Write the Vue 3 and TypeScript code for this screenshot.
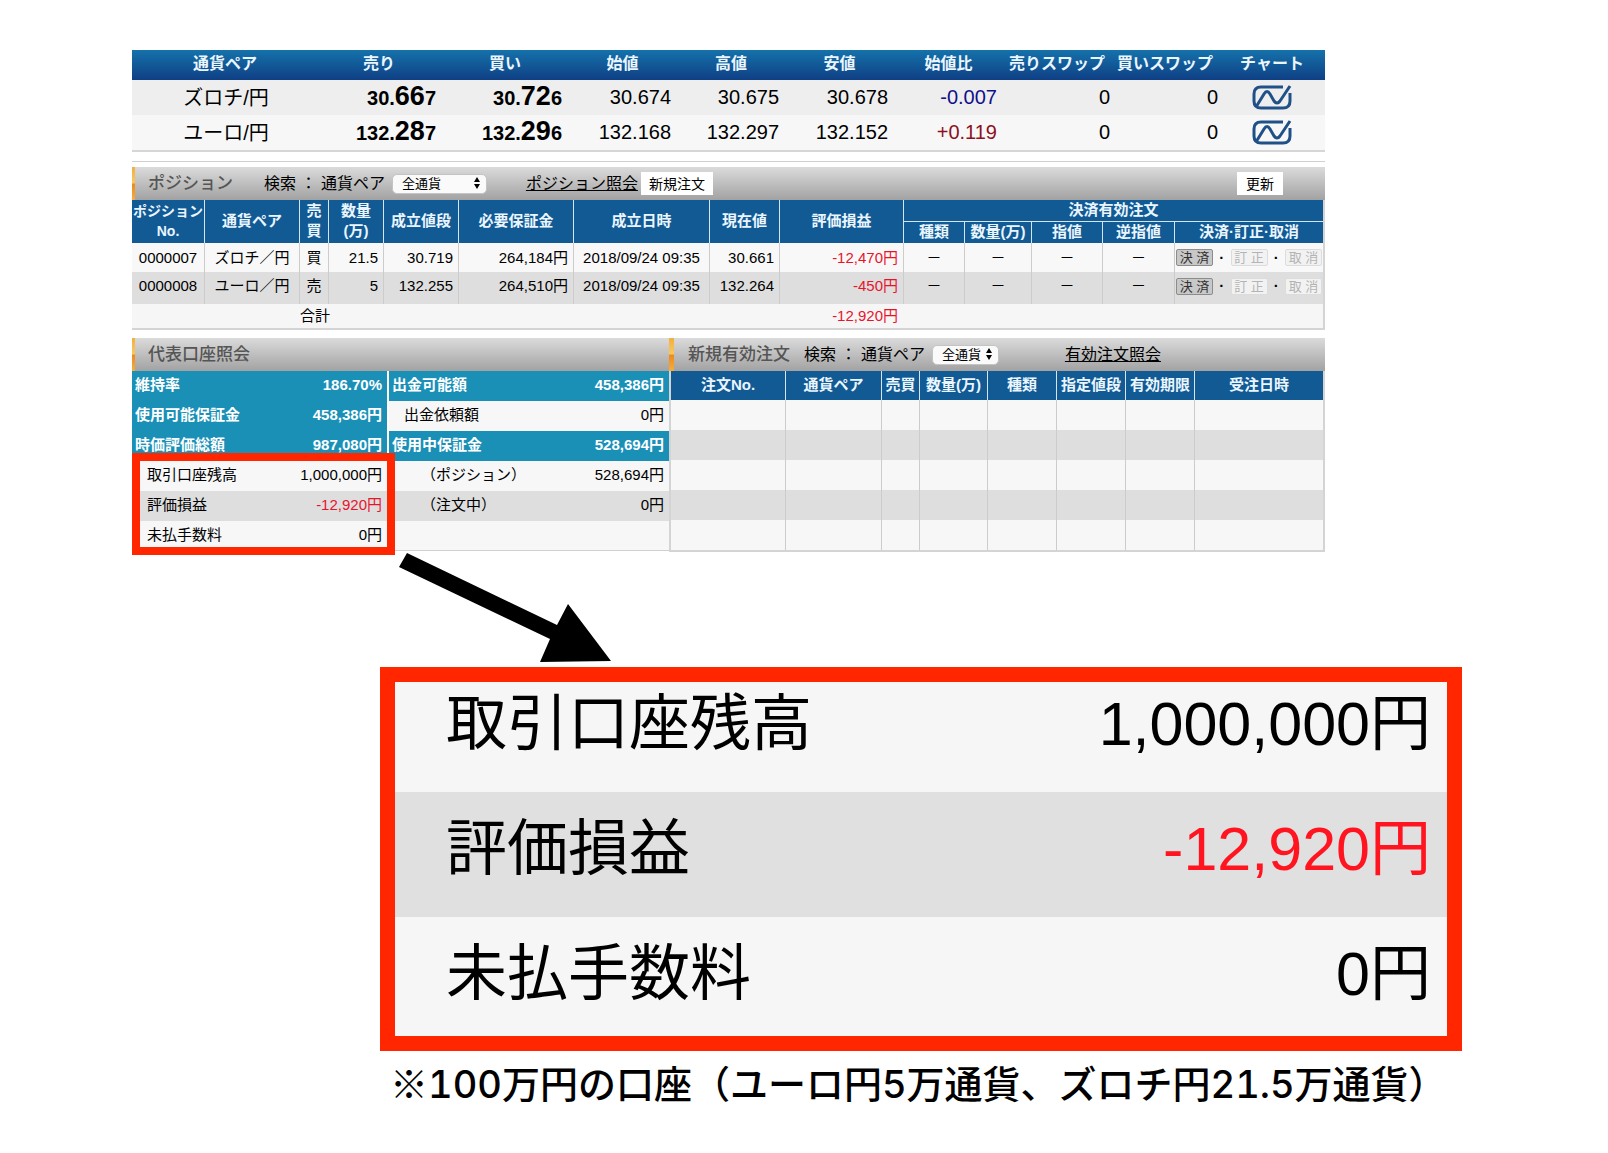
<script setup lang="ts">
interface Quote {
  pair: string
  bid: [string, string, string]
  ask: [string, string, string]
  open: string
  high: string
  low: string
  diff: string
}

interface Position {
  no: string
  pair: string
  side: string
  amount: string
  price: string
  margin: string
  time: string
  current: string
  profit: string
}

interface AccountCell {
  label: string
  value: string
  kind: string
}

const quoteHeads = ['通貨ペア', '売り', '買い', '始値', '高値', '安値', '始値比', '売りスワップ', '買いスワップ', 'チャート']
const quoteCols = [184, 126, 126, 109, 108, 109, 109, 108, 108, 106]
const quotes: Quote[] = [
  { pair: 'ズロチ/円', bid: ['30.', '66', '7'], ask: ['30.', '72', '6'], open: '30.674', high: '30.675', low: '30.678', diff: '-0.007' },
  { pair: 'ユーロ/円', bid: ['132.', '28', '7'], ask: ['132.', '29', '6'], open: '132.168', high: '132.297', low: '132.152', diff: '+0.119' },
]

const positionCols = [72, 95, 29, 55, 75, 115, 136, 70, 124, 61, 67, 71, 72, 149]
const positions: Position[] = [
  { no: '0000007', pair: 'ズロチ／円', side: '買', amount: '21.5', price: '30.719', margin: '264,184円', time: '2018/09/24 09:35', current: '30.661', profit: '-12,470円' },
  { no: '0000008', pair: 'ユーロ／円', side: '売', amount: '5', price: '132.255', margin: '264,510円', time: '2018/09/24 09:35', current: '132.264', profit: '-450円' },
]

const accountCols = [130, 125, 141, 141]
const account: [AccountCell, AccountCell][] = [
  [{ label: '維持率', value: '186.70%', kind: 'head' }, { label: '出金可能額', value: '458,386円', kind: 'head' }],
  [{ label: '使用可能保証金', value: '458,386円', kind: 'head' }, { label: '出金依頼額', value: '0円', kind: 'sub' }],
  [{ label: '時価評価総額', value: '987,080円', kind: 'head' }, { label: '使用中保証金', value: '528,694円', kind: 'head' }],
  [{ label: '取引口座残高', value: '1,000,000円', kind: 'sub' }, { label: '（ポジション）', value: '528,694円', kind: 'deep' }],
  [{ label: '評価損益', value: '-12,920円', kind: 'sub dark loss' }, { label: '（注文中）', value: '0円', kind: 'deep dark' }],
  [{ label: '未払手数料', value: '0円', kind: 'sub' }, { label: '', value: '', kind: 'sub' }],
]

const orderHeads = ['注文No.', '通貨ペア', '売買', '数量(万)', '種類', '指定値段', '有効期限', '受注日時']
const orderCols = [114, 96, 38, 68, 69, 69, 69, 129]

const zoomed = [
  { label: '取引口座残高', value: '1,000,000円', loss: false },
  { label: '評価損益', value: '-12,920円', loss: true },
  { label: '未払手数料', value: '0円', loss: false },
]
</script>

<template>
  <main class="page">
    <div class="desk">
      <table class="quotes">
        <colgroup><col v-for="(w, i) in quoteCols" :key="i" :style="{ width: w + 'px' }" /></colgroup>
        <thead>
          <tr><th v-for="h in quoteHeads" :key="h" scope="col">{{ h }}</th></tr>
        </thead>
        <tbody>
          <tr v-for="q in quotes" :key="q.pair">
            <td class="center pair">{{ q.pair }}</td>
            <td class="price">{{ q.bid[0] }}<b>{{ q.bid[1] }}</b>{{ q.bid[2] }}</td>
            <td class="price">{{ q.ask[0] }}<b>{{ q.ask[1] }}</b>{{ q.ask[2] }}</td>
            <td>{{ q.open }}</td>
            <td>{{ q.high }}</td>
            <td>{{ q.low }}</td>
            <td :class="q.diff.startsWith('-') ? 'down' : 'up'">{{ q.diff }}</td>
            <td class="swap">0</td>
            <td class="swap">0</td>
            <td class="center">
              <a href="#" class="chart" aria-label="チャート">
                <svg viewBox="0 0 40 25" width="40" height="25" fill="none" stroke="#1f5088" stroke-width="3">
                  <path d="M31 2H9Q2 2 2 9v7q0 7 7 7h22q7 0 7-7V8" />
                  <path d="M4 22L12 9q3-5 6 0l4 7q3 4 6 0L38 1" />
                </svg>
              </a>
            </td>
          </tr>
        </tbody>
      </table>
      <hr class="rule" />

      <section class="panel">
        <div class="bar">
          <h2 class="title">ポジション</h2>
          <label class="search" for="pos-pair">検索 ： 通貨ペア</label>
          <span class="pick wide">
            <select id="pos-pair"><option>全通貨</option></select>
            <svg viewBox="0 0 8 12" width="8" height="12"><path d="M4 0l3 5H1zM4 12l3-5H1z" /></svg>
          </span>
          <a href="#" class="link">ポジション照会</a>
          <button type="button" class="flat">新規注文</button>
          <button type="button" class="flat refresh">更新</button>
        </div>
        <table class="grid positions">
          <colgroup><col v-for="(w, i) in positionCols" :key="i" :style="{ width: w + 'px' }" /></colgroup>
          <thead>
            <tr>
              <th rowspan="2" scope="col" class="tight">ポジション<br />No.</th>
              <th rowspan="2" scope="col">通貨ペア</th>
              <th rowspan="2" scope="col">売<br />買</th>
              <th rowspan="2" scope="col">数量<br />(万)</th>
              <th rowspan="2" scope="col">成立値段</th>
              <th rowspan="2" scope="col">必要保証金</th>
              <th rowspan="2" scope="col">成立日時</th>
              <th rowspan="2" scope="col">現在値</th>
              <th rowspan="2" scope="col">評価損益</th>
              <th colspan="5" scope="colgroup" class="group">決済有効注文</th>
            </tr>
            <tr>
              <th scope="col">種類</th>
              <th scope="col">数量(万)</th>
              <th scope="col">指値</th>
              <th scope="col">逆指値</th>
              <th scope="col">決済·訂正·取消</th>
            </tr>
          </thead>
          <tbody>
            <tr v-for="p in positions" :key="p.no">
              <td>{{ p.no }}</td>
              <td>{{ p.pair }}</td>
              <td>{{ p.side }}</td>
              <td class="num">{{ p.amount }}</td>
              <td class="num">{{ p.price }}</td>
              <td class="num">{{ p.margin }}</td>
              <td>{{ p.time }}</td>
              <td class="num">{{ p.current }}</td>
              <td class="num loss">{{ p.profit }}</td>
              <td>－</td>
              <td>－</td>
              <td>－</td>
              <td>－</td>
              <td>
                <div class="acts">
                  <button type="button" class="act">決 済</button><b>·</b>
                  <button type="button" class="act" disabled>訂 正</button><b>·</b>
                  <button type="button" class="act" disabled>取 消</button>
                </div>
              </td>
            </tr>
          </tbody>
          <tfoot>
            <tr>
              <td colspan="2"></td>
              <td>合計</td>
              <td colspan="5"></td>
              <td class="num loss">-12,920円</td>
              <td colspan="5"></td>
            </tr>
          </tfoot>
        </table>
      </section>

      <div class="lower">
        <section class="account">
          <div class="bar"><h2 class="title">代表口座照会</h2></div>
          <div class="holder">
            <table class="balance">
              <colgroup><col v-for="(w, i) in accountCols" :key="i" :style="{ width: w + 'px' }" /></colgroup>
              <tbody>
                <tr v-for="(row, i) in account" :key="i">
                  <template v-for="(c, j) in row" :key="j">
                    <td :class="[c.kind, 'label']">{{ c.label }}</td>
                    <td :class="[c.kind, 'value']">{{ c.value }}</td>
                  </template>
                </tr>
              </tbody>
            </table>
            <div class="highlight"></div>
          </div>
        </section>

        <section class="orders">
          <div class="bar">
            <h2 class="title">新規有効注文</h2>
            <label class="search" for="ord-pair">検索 ： 通貨ペア</label>
            <span class="pick">
              <select id="ord-pair"><option>全通貨</option></select>
              <svg viewBox="0 0 8 12" width="8" height="12"><path d="M4 0l3 5H1zM4 12l3-5H1z" /></svg>
            </span>
            <a href="#" class="link">有効注文照会</a>
          </div>
          <table class="grid list">
            <colgroup><col v-for="(w, i) in orderCols" :key="i" :style="{ width: w + 'px' }" /></colgroup>
            <thead>
              <tr><th v-for="h in orderHeads" :key="h" scope="col">{{ h }}</th></tr>
            </thead>
            <tbody>
              <tr v-for="r in 5" :key="r"><td v-for="h in orderHeads" :key="h"></td></tr>
            </tbody>
          </table>
        </section>
      </div>
    </div>

    <svg class="arrow" viewBox="0 0 214 115" width="214" height="115" aria-hidden="true">
      <path d="M8 1L158 73L169 52L212 109L141 110L151 87L0 15Z" />
    </svg>

    <section class="closeup">
      <dl>
        <div v-for="z in zoomed" :key="z.label" class="line">
          <dt>{{ z.label }}</dt>
          <dd :class="{ loss: z.loss }">{{ z.value }}</dd>
        </div>
      </dl>
    </section>
    <p class="note"><span class="mark">※</span>100万円の口座（ユーロ円5万通貨、ズロチ円21.5万通貨）</p>
  </main>
</template>

<style>
body {
  background: #fff;
}
</style>

<style scoped>
.page {
  box-sizing: border-box;
  padding: 50px 0 40px;
  font-family: "Liberation Sans", "Noto Sans CJK JP", sans-serif;
  font-size: 15px;
  line-height: 20px;
  color: #000;
}
.desk {
  margin: 0 283px 0 132px;
}
table {
  width: 100%;
  table-layout: fixed;
  border-collapse: separate;
  border-spacing: 0;
}
th,
td {
  box-sizing: border-box;
  padding: 0;
  white-space: nowrap;
}
a {
  color: inherit;
}
.loss {
  color: #e8142c;
}

.quotes {
  border-bottom: 2px solid #d6d6d6;
  font-size: 20px;
}
.quotes th {
  height: 30px;
  padding-bottom: 2px;
  font-size: 16px;
  color: #eaf6ff;
}
.quotes thead {
  background: linear-gradient(#1572ab, #0f3f84);
}
.quotes td {
  height: 35px;
  padding: 0 6px 1px 0;
  text-align: right;
  line-height: 30px;
}
.quotes tbody tr {
  background: #f7f7f7;
}
.quotes tbody tr:first-child {
  background: #eee;
}
.quotes td.center {
  padding: 0;
  text-align: center;
}
.quotes td.pair {
  padding-left: 4px;
}
.quotes th:first-child {
  padding-left: 2px;
}
.quotes td.swap {
  padding-right: 1px;
}
.price {
  font-weight: bold;
}
.price b {
  font-size: 27px;
}
.down {
  color: #10108c;
}
.up {
  color: #8c1020;
}
.chart,
.chart svg {
  display: block;
}
.chart svg {
  margin: 0 auto;
}
.rule {
  margin: 9px 0 5px;
  border: 0;
  border-top: 1px solid #d0d0d0;
}

.bar {
  display: flex;
  align-items: center;
  height: 33px;
  box-sizing: border-box;
  border-left: 3px solid;
  border-image: linear-gradient(#f3ad3c, #f8c860 48%, #ef8a1c 52%, #f5b040) 1;
  background: linear-gradient(#dadbda, #a2a2a2);
  font-size: 16px;
}
.title {
  margin: 0 0 0 13px;
  font-size: 17px;
  font-weight: 500;
  color: #555;
}
.search {
  margin-left: 31px;
  white-space: pre;
}
.pick {
  position: relative;
  width: 67px;
  height: 20px;
  margin-left: 7px;
}
.pick.wide {
  width: 95px;
}
.pick select {
  appearance: none;
  display: block;
  width: 100%;
  height: 20px;
  padding: 0 0 0 9px;
  border: 1px solid #c4c4c4;
  border-radius: 5px;
  background: #fafafa;
  font: 13px/18px "Liberation Sans", "Noto Sans CJK JP", sans-serif;
  color: #000;
}
.pick svg {
  position: absolute;
  top: 3px;
  right: 6px;
  pointer-events: none;
}
.link {
  margin-left: 39px;
}
.flat {
  height: 23px;
  margin-left: 3px;
  padding: 0 8px;
  border: 0;
  background: #fff;
  font: 14px/20px "Liberation Sans", "Noto Sans CJK JP", sans-serif;
  color: #000;
}
.flat.refresh {
  margin-left: auto;
  margin-right: 42px;
  padding: 0 9px;
}

.grid {
  border-right: 2px solid #d4d4d4;
  border-bottom: 2px solid #d4d4d4;
}
.grid th {
  background: #125a94;
  color: #eaf6ff;
  border-left: 1px solid #d4e4f0;
}
.grid td {
  text-align: center;
  border-left: 1px solid #ccc;
}
.grid tr > :first-child {
  border-left: 0;
}
.grid thead tr + tr > :first-child {
  border-left: 1px solid #d4e4f0;
}
.grid .num {
  padding-right: 5px;
  text-align: right;
}
.positions th {
  height: 21px;
  padding-bottom: 1px;
  line-height: 20px;
}
.positions .group {
  height: 22px;
  border-bottom: 1px solid #d4e4f0;
}
.positions .tight {
  font-size: 14px;
}
.positions tbody td {
  height: 29px;
  background: #f8f8f8;
}
.positions tbody tr + tr td {
  height: 32px;
  padding-bottom: 4px;
  background: #dedede;
}
.positions tfoot td {
  height: 24px;
  background: #f6f6f6;
  border-left-color: transparent;
}
.acts {
  display: flex;
  align-items: center;
  justify-content: space-between;
  padding: 0 1px;
}
.act {
  width: 37px;
  height: 17px;
  padding: 0;
  border: 1px solid #8c8c8c;
  border-radius: 2px;
  background: #c8c8c8;
  font: 13px/15px "Liberation Sans", "Noto Sans CJK JP", sans-serif;
  color: #333;
}
.act:disabled {
  border-color: #dcdcdc;
  background: #f2f2f2;
  color: #b4b4b4;
}

.lower {
  display: grid;
  grid-template-columns: 537fr 656fr;
  margin-top: 8px;
}
.holder {
  position: relative;
}
.balance td {
  height: 30px;
  padding-bottom: 2px;
  background: #f7f7f7;
}
.balance .dark {
  background: #dedede;
}
.balance .head {
  background: #1b90b7;
  color: #fff;
  font-weight: bold;
}
.balance .label {
  padding-left: 3px;
}
.balance .label.sub {
  padding-left: 15px;
}
.balance .label.deep {
  padding-left: 32px;
}
.balance .label.loss {
  color: #000;
}
.balance .value + .label {
  border-left: 2px solid #fff;
}
.balance .value {
  padding-right: 5px;
  text-align: right;
}
.balance tr:last-child td {
  border-bottom: 1px solid #d0d0d0;
}
.highlight {
  position: absolute;
  box-sizing: border-box;
  top: 82px;
  bottom: -4px;
  left: 0;
  width: 263px;
  border: 8px solid #ff2600;
}
.orders .bar {
  border-left-width: 5px;
}
.orders .title {
  margin-left: 14px;
}
.orders .search {
  margin-left: 14px;
}
.orders .link {
  margin-left: 66px;
}
.list {
  border-left: 2px solid #d4d4d4;
}
.list th {
  height: 29px;
  padding-bottom: 1px;
}
.list td {
  height: 30px;
  background: #f7f7f7;
}
.list tr:nth-child(even) td {
  background: #dedede;
}

.arrow {
  display: block;
  margin-left: 399px;
}
.closeup {
  margin: 0 146px 0 380px;
  border: 15px solid #ff2600;
  background: #f6f6f6;
}
.closeup dl {
  margin: 0;
}
.line {
  display: flex;
  justify-content: space-between;
  padding: 17px 16px 28px 51px;
  font-size: 61px;
  line-height: 80px;
}
.line:first-child {
  padding-top: 2px;
}
.line:nth-child(2) {
  background: #e0e0e0;
}
.line:last-child {
  padding-bottom: 22px;
}
.line dd {
  margin: 0;
}
.line .loss {
  color: #ff1420;
}
.note {
  margin: 7px 0 0 390px;
  font: 500 38px/48px Inter, "Noto Sans CJK JP", sans-serif;
  font-variant-numeric: tabular-nums;
  white-space: nowrap;
}
.mark {
  font-family: "Noto Sans CJK JP", sans-serif;
  font-weight: 400;
}
</style>
